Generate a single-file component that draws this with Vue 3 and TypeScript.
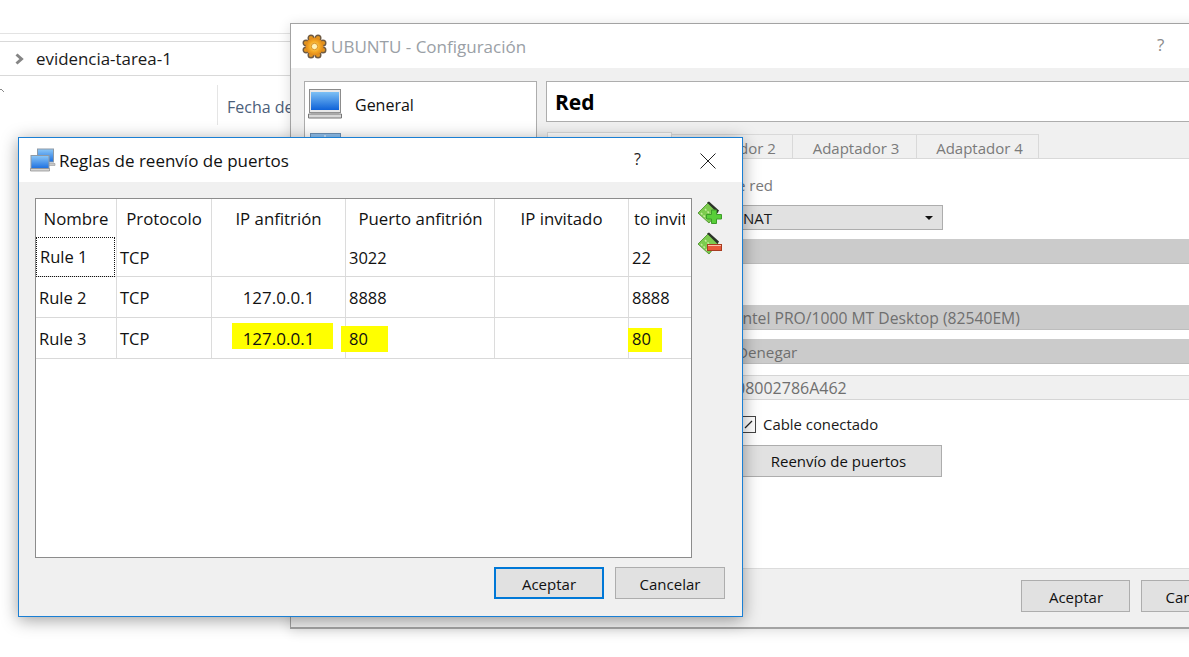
<script setup lang="ts">
interface Rule { name: string; proto: string; ip: string; hostPort: string; guestPort: string }
const rules: Rule[] = [
  { name: 'Rule 1', proto: 'TCP', ip: '', hostPort: '3022', guestPort: '22' },
  { name: 'Rule 2', proto: 'TCP', ip: '127.0.0.1', hostPort: '8888', guestPort: '8888' },
  { name: 'Rule 3', proto: 'TCP', ip: '127.0.0.1', hostPort: '80', guestPort: '80' },
]
const tabs = ['', 'Adaptador 2', 'Adaptador 3', 'Adaptador 4']
const teeth = Array.from({ length: 8 }, (_, i) => {
  const a = (i * Math.PI) / 4 + Math.PI / 8
  return { x: 12.5 + 9.2 * Math.cos(a), y: 12.5 + 9.2 * Math.sin(a) }
})
</script>

<template>
  <div class="desktop">
    <section class="explorer">
      <div class="ex-top"></div>
      <div class="ex-gap"></div>
      <div class="crumb">
        <svg class="chev" width="9" height="12" viewBox="0 0 9 12"><path d="M1.500 1.500 6.500 6 1.500 10.500" fill="none" stroke="#858585" stroke-width="3" /></svg>
        <span>evidencia-tarea-1</span>
      </div>
      <div class="ex-head">
        <svg class="sort" width="6" height="5" viewBox="0 0 6 5"><path d="M-2 4 1 1 4 4" fill="none" stroke="#888" /></svg>
        <span class="col-date">Fecha de</span>
      </div>
    </section>

    <section class="win config">
      <header class="titlebar">
        <svg class="gear" width="25" height="25" viewBox="0 0 25 25">
          <defs>
            <radialGradient id="g1" cx=".5" cy=".5" r=".55"><stop offset="0" stop-color="#ffe27a" /><stop offset=".55" stop-color="#f5a823" /><stop offset="1" stop-color="#d97f18" /></radialGradient>
          </defs>
          <circle v-for="(t, i) in teeth" :key="i" :cx="t.x" :cy="t.y" r="2.800" fill="#e3951f" stroke="#6f5a42" stroke-width="1.400" />
          <circle cx="12.500" cy="12.500" r="9" fill="url(#g1)" />
          <circle cx="12.500" cy="12.500" r="3.200" fill="#fff2b8" stroke="#d98f22" stroke-width="1" />
        </svg>
        <span class="cfg-title">UBUNTU - Configuración</span>
        <span class="cfg-help">?</span>
      </header>
      <div class="cfg-body">
        <aside class="side">
          <div class="side-item">
            <svg width="36" height="30" viewBox="0 0 36 30">
              <defs><linearGradient id="s1" x1="0" y1="0" x2="0" y2="1"><stop offset="0" stop-color="#7cc0f5" /><stop offset="1" stop-color="#0f62d8" /></linearGradient></defs>
              <rect x="1.500" y=".5" width="31" height="23" fill="#e8e8e8" stroke="#8c8c8c" />
              <rect x="3" y="3" width="28" height="18" fill="url(#s1)" />
              <path d="M.5 25h33v4H.5z" fill="#d8d8d8" stroke="#777" />
              <path d="M3 24h28" stroke="#999" />
            </svg>
            <span>General</span>
          </div>
          <div class="side-item second">
            <svg width="32" height="24" viewBox="0 0 32 24"><rect x=".5" y=".5" width="30" height="22" fill="#8fc0ee" stroke="#6b90b5" /><path d="M15 2v6" stroke="#fff" /></svg>
          </div>
        </aside>
        <main class="page">
          <h1 class="page-title">Red</h1>
          <nav class="tabs">
            <span v-for="(t, i) in tabs" :key="i" class="tab" :class="'tab' + i">{{ t }}</span>
          </nav>
          <div class="panel">
            <p class="enable">Habilitar adaptador de red</p>
            <div class="combo"><span>NAT</span><i class="caret"></i></div>
            <div class="bar name-bar"></div>
            <div class="bar type-bar"><span>Intel PRO/1000 MT Desktop (82540EM)</span></div>
            <div class="bar deny-bar"><span>Denegar</span></div>
            <div class="mac">08002786A462</div>
            <label class="check">
              <svg width="15" height="17" viewBox="0 0 15 17"><rect x=".5" y=".5" width="14" height="16" fill="#fff" stroke="#444" /><path d="M4 12 11 5" stroke="#222" stroke-width="1.300" /></svg>
              <span>Cable conectado</span>
            </label>
            <button class="btn fwd">Reenvío de puertos</button>
          </div>
        </main>
      </div>
      <footer class="cfg-foot">
        <button class="btn foot-btn">Aceptar</button>
        <button class="btn foot-btn">Cancelar</button>
      </footer>
    </section>

    <section class="win dialog">
      <header class="dlg-title">
        <svg width="29" height="24" viewBox="0 0 29 24">
          <defs><linearGradient id="n1" x1="0" y1="0" x2="0" y2="1"><stop offset="0" stop-color="#8cc8f8" /><stop offset="1" stop-color="#1c6fe0" /></linearGradient></defs>
          <rect x="7.500" y="1" width="16" height="13" fill="url(#n1)" stroke="#8f9aa5" />
          <path d="M9 15.500h16v2H9z" fill="#c8c8c8" stroke="#999" stroke-width=".6" />
          <rect x="1" y="7.500" width="18" height="13" fill="url(#n1)" stroke="#8f9aa5" />
          <path d="M.5 20.500h19v2.500H.5z" fill="#d4d4d4" stroke="#888" stroke-width=".7" />
        </svg>
        <span class="dlg-text">Reglas de reenvío de puertos</span>
        <span class="dlg-help">?</span>
        <svg class="dlg-x" width="16" height="16" viewBox="0 0 16 16"><path d="M.5.5l15 15M15.500.5l-15 15" stroke="#222" stroke-width="1" /></svg>
      </header>
      <div class="dlg-main">
        <div class="rules">
          <div class="row head">
            <div class="cell c1">Nombre</div>
            <div class="cell c2">Protocolo</div>
            <div class="cell c3">IP anfitrión</div>
            <div class="cell c4">Puerto anfitrión</div>
            <div class="cell c5">IP invitado</div>
            <div class="cell c6">to invitado</div>
          </div>
          <div v-for="(r, i) in rules" :key="r.name" class="row" :class="{ first: i === 0 }">
            <div class="cell c1"><span :class="{ focus: i === 0 }">{{ r.name }}</span></div>
            <div class="cell c2">{{ r.proto }}</div>
            <div class="cell c3 ip"><i v-if="i === 2" class="mark m-ip"></i><span>{{ r.ip }}</span></div>
            <div class="cell c4"><i v-if="i === 2" class="mark m-host"></i><span>{{ r.hostPort }}</span></div>
            <div class="cell c5"></div>
            <div class="cell c6"><i v-if="i === 2" class="mark m-guest"></i><span>{{ r.guestPort }}</span></div>
          </div>
        </div>
        <div class="tools">
          <svg width="26" height="24" viewBox="0 0 26 24">
            <path d="M1 12 11 2l10 9-9 11z" fill="#7ccb4e" stroke="#5a9c3c" />
            <path d="M10 1.500 12 .5l10 9-1.500 2.500z" fill="#2c3428" />
            <path d="M4 12l7 7M8 8l7 7" stroke="#c4ec9c" stroke-width="1.500" stroke-dasharray="2 1.500" />
            <path d="M14.500 9h5v4.500h5v4.500h-5v4.500h-5V18h-5v-4.500h5z" fill="#58cf38" stroke="#3d9c2a" />
          </svg>
          <svg width="26" height="24" viewBox="0 0 26 24">
            <path d="M1 12 11 2l10 9-9 11z" fill="#7ccb4e" stroke="#5a9c3c" />
            <path d="M10 1.500 12 .5l10 9-1.500 2.500z" fill="#2c3428" />
            <path d="M4 12l7 7M8 8l7 7" stroke="#c4ec9c" stroke-width="1.500" stroke-dasharray="2 1.500" />
            <rect x="10.500" y="12.500" width="14" height="6" fill="#e8583a" stroke="#a83c20" />
            <path d="M11 13.500h13" stroke="#fbc0ac" />
          </svg>
        </div>
      </div>
      <footer class="dlg-foot">
        <button class="btn dlg-btn primary">Aceptar</button>
        <button class="btn dlg-btn">Cancelar</button>
      </footer>
    </section>
  </div>
</template>

<style>
html, body { margin: 0; background: #fff; }
</style>

<style scoped>
.desktop {
  position: relative;
  width: 1189px;
  height: 657px;
  overflow: hidden;
  background: #fff;
  font-family: "Open Sans", "Noto Sans", sans-serif;
  font-size: 15px;
  color: #111;
}
.explorer { display: flex; flex-direction: column; }
.ex-top { height: 33px; border-bottom: 1px solid #e3e3e3; }
.ex-gap { height: 7px; border-bottom: 1px solid #d9d9d9; }
.crumb {
  height: 33px;
  border-bottom: 1px solid #d9d9d9;
  display: flex;
  align-items: center;
  padding-left: 15px;
  gap: 12px;
  font-size: 16.900px;
  color: #1a1a1a;
}
.ex-head { position: relative; display: flex; padding: 9px 0 0 217px; }
.sort { position: absolute; left: 0; top: 12px; }
.col-date {
  border-left: 1px solid #e5e5e5;
  padding: 11px 0 7px 9px;
  height: 22px;
  line-height: 22px;
  color: #4c607a;
  font-size: 16px;
  white-space: nowrap;
}
.win { position: absolute; box-sizing: border-box; display: flex; flex-direction: column; }
.config {
  left: 290px; top: 23px; width: 960px; height: 606px;
  border: 1px solid #a3a3a3;
  border-width: 1px 0 2px 1px;
  background: #f0f0f0;
  box-shadow: 0 2px 12px rgba(0, 0, 0, .14);
}
.titlebar { height: 44px; flex: none; background: #fff; display: flex; align-items: center; padding-left: 11px; position: relative; }
.gear { flex: none; }
.cfg-title { margin-left: 4px; font-size: 17px; color: #9aa0a6; white-space: nowrap; }
.cfg-help { position: absolute; left: 866px; top: 9px; font-size: 17px; color: #8a8a8a; }
.cfg-body { flex: 1; display: flex; min-height: 0; padding: 13px 0 0 13px; }
.side { width: 233px; flex: none; box-sizing: border-box; background: #fff; border: 1px solid #adadad; border-bottom: 0; margin-bottom: 60px; }
.side-item { display: flex; align-items: center; gap: 11px; padding: 7px 0 0 3px; font-size: 16px; }
.side-item > span { position: relative; top: 1px; }
.side-item.second { padding: 14px 0 0 5px; }
.page { flex: 1; margin-left: 9px; display: flex; flex-direction: column; min-width: 0; }
.page-title { margin: 0; box-sizing: border-box; height: 41px; background: #fff; border: 1px solid #adadad; font-size: 21px; font-weight: 700; line-height: 41px; padding-left: 8px; color: #000; }
.tabs { display: flex; margin: 10px 0 0 1px; height: 27px; align-items: flex-end; }
.tab { box-sizing: border-box; height: 25px; width: 122px; padding-left: 3px; background: #f0f0f0; border: 1px solid #d9d9d9; border-width: 1px 1px 0 0; text-align: center; line-height: 27px; font-size: 15px; color: #7a7a7a; white-space: nowrap; }
.tab0 { width: 125px; height: 27px; background: #fff; border-left: 1px solid #d9d9d9; }
.tab1 { width: 121px; padding-left: 1px; }
.tab2 { width: 124px; }
.tab3 { padding-left: 4px; }
.panel { background: #fff; height: 411px; margin-top: -1px; border-top: 1px solid #d9d9d9; position: relative; box-sizing: border-box; padding-left: 186px; display: flex; flex-direction: column; align-items: flex-start; }
.enable { margin: 16px 0 0 -186px; width: 227px; text-align: right; font-size: 15px; color: #7a7a7a; height: 20px; line-height: 20px; white-space: nowrap; }
.combo { box-sizing: border-box; margin-top: 10px; width: 211px; height: 25px; background: #e1e1e1; border: 1px solid #adadad; display: flex; align-items: center; justify-content: space-between; padding: 0 9px 0 10px; color: #1a1a1a; font-size: 15px; }
.caret { width: 0; height: 0; border: 4px solid transparent; border-top: 4px solid #111; border-bottom: 0; }
.bar { box-sizing: border-box; width: 600px; height: 25px; background: #cbcbcb; border-bottom: 1px solid #bdbdbd; color: #6f6f6f; font-size: 15.700px; line-height: 26px; padding-left: 6px; white-space: nowrap; }
.name-bar { margin-top: 9px; }
.type-bar { margin-top: 41px; }
.deny-bar { margin-top: 9px; padding-left: 5px; font-size: 15.200px; }
.mac { box-sizing: border-box; margin-top: 11px; width: 600px; height: 25px; background: #f0f0f0; border: 1px solid #d5d5d5; border-width: 1px 0; color: #6f6f6f; font-size: 16px; line-height: 24px; padding-left: 4px; }
.check { margin: 15px 0 0 9px; display: flex; align-items: center; gap: 7px; font-size: 14.900px; height: 18px; color: #1a1a1a; white-space: nowrap; }
.btn { box-sizing: border-box; font-family: inherit; background: #e1e1e1; border: 1px solid #adadad; color: #111; padding: 0; font-size: 15px; }
.fwd { margin-top: 12px; width: 210px; height: 32px; padding-left: 3px; }
.cfg-foot { flex: none; height: 59px; box-sizing: border-box; background: #f0f0f0; border-top: 1px solid #dcdcdc; padding: 11px 0 0 730px; display: flex; gap: 11px; }
.foot-btn { width: 110px; height: 32px; padding: 2px 0 0 1px; }
.dialog {
  left: 18px; top: 137px; width: 725px; height: 480px;
  border: 1px solid #1a7fd4;
  background: #f0f0f0;
  box-shadow: 0 3px 16px rgba(0, 0, 0, .38);
}
.dlg-title { height: 44px; flex: none; background: #fff; display: flex; align-items: center; padding-left: 11px; position: relative; }
.dlg-text { font-size: 17px; color: #111; white-space: nowrap; }
.dlg-help { position: absolute; left: 615px; top: 10px; font-size: 16px; color: #222; }
.dlg-x { position: absolute; left: 681px; top: 15px; }
.dlg-main { flex: 1; display: flex; padding: 16px 0 0 16px; min-height: 0; }
.rules { box-sizing: border-box; width: 657px; height: 360px; background: #fff; border: 1px solid #8c8c8c; overflow: hidden; flex: none; }
.row { display: flex; height: 41px; box-sizing: border-box; border-bottom: 1px solid #d9d9d9; }
.row.head { height: 39px; border-bottom: 0; }
.row.first { height: 39px; }
.cell { box-sizing: border-box; position: relative; border-right: 1px solid #dcdcdc; display: flex; align-items: center; font-size: 16.500px; color: #111; padding-left: 3px; white-space: nowrap; overflow: visible; flex: none; }
.cell > span { position: relative; }
.ip > span { font-size: 17px; }
.c1 { width: 81px; }
.c2 { width: 95px; }
.c3 { width: 134px; }
.c4 { width: 149px; }
.c5 { width: 134px; }
.c6 { width: 62px; border-right: 0; }
.head .cell { justify-content: center; padding: 0; font-size: 16.800px; }
.head .c4 { padding-left: 1px; }
.head .c6 { justify-content: flex-start; padding-left: 5px; width: 56px; overflow: hidden; }
.ip { justify-content: center; padding: 0; }
.focus { display: block; outline: 1px dotted #111; width: 77px; height: 38px; line-height: 38px; padding-left: 3px; box-sizing: border-box; margin-left: -2px; }
.mark { position: absolute; background: #ff0; display: block; }
.m-ip { left: 20px; top: 5px; width: 101px; height: 26px; }
.m-host { left: -5px; top: 8px; width: 47px; height: 26px; }
.m-guest { left: -1px; top: 10px; width: 34px; height: 24px; }
.tools { display: flex; flex-direction: column; gap: 7px; margin: 3px 0 0 5px; }
.dlg-foot { flex: none; height: 59px; box-sizing: border-box; padding: 10px 0 0 475px; display: flex; gap: 11px; }
.dlg-btn { width: 110px; height: 32px; padding-top: 2px; }
.primary { border: 2px solid #0078d7; }
</style>
